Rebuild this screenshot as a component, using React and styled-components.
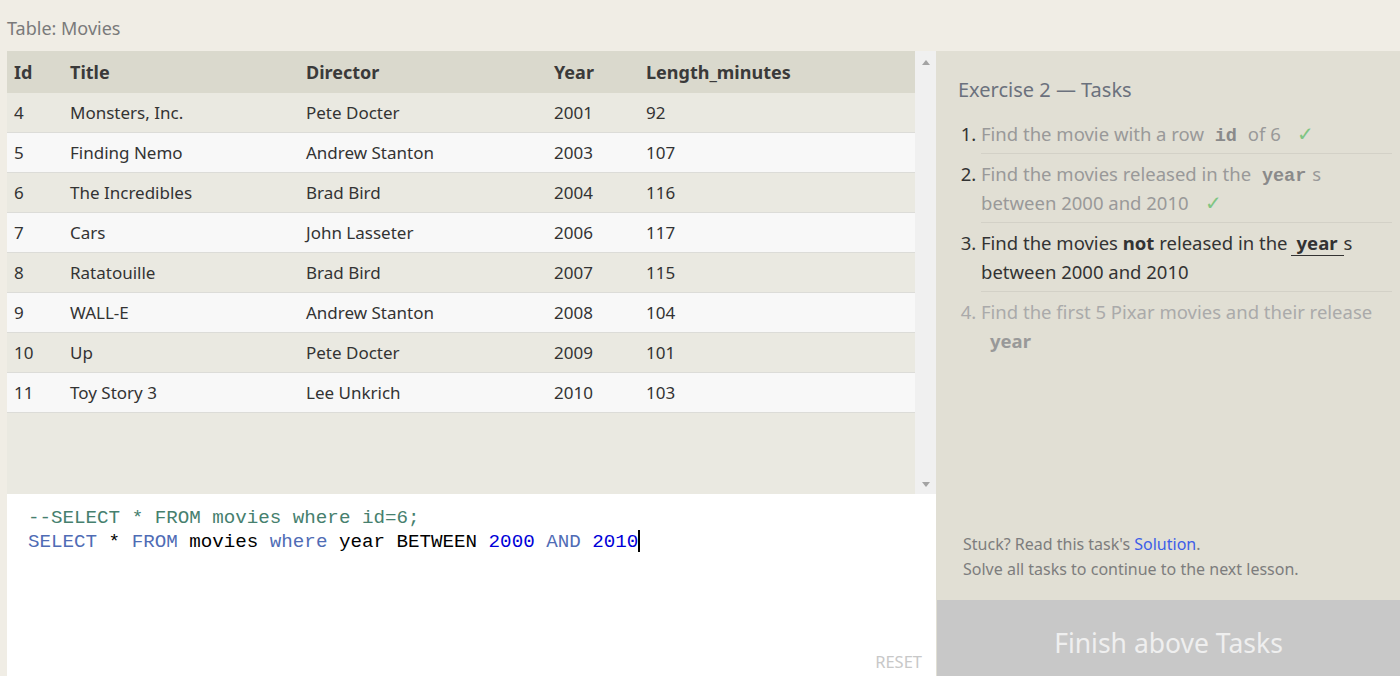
import styled, { createGlobalStyle } from "styled-components";

const GlobalStyle = createGlobalStyle`
  html, body {
    margin: 0;
    padding: 0;
    background: #f0ede5;
    font-family: "Noto Sans", "Open Sans", sans-serif;
    color: #333;
  }
`;

const movies = [
  [4, "Monsters, Inc.", "Pete Docter", 2001, 92],
  [5, "Finding Nemo", "Andrew Stanton", 2003, 107],
  [6, "The Incredibles", "Brad Bird", 2004, 116],
  [7, "Cars", "John Lasseter", 2006, 117],
  [8, "Ratatouille", "Brad Bird", 2007, 115],
  [9, "WALL-E", "Andrew Stanton", 2008, 104],
  [10, "Up", "Pete Docter", 2009, 101],
  [11, "Toy Story 3", "Lee Unkrich", 2010, 103],
];

// widths are border-box widths of each column
const columns = [
  { name: "Id", width: 56 },
  { name: "Title", width: 236 },
  { name: "Director", width: 248 },
  { name: "Year", width: 92 },
  { name: "Length_minutes", width: 276 },
];

const Page = styled.div`
  height: 676px;
  display: flex;
  flex-direction: column;
  overflow: hidden;
`;

const TopBar = styled.div`
  height: 51px;
  padding: 4px 0 0 7px;
  display: flex;
  align-items: center;
  font-size: 18px;
  color: #7a7a7a;
  box-sizing: border-box;
`;

const Main = styled.div`
  flex: 1;
  display: flex;
  padding-left: 7px;
`;

const Left = styled.div`
  width: 929px;
  display: flex;
  flex-direction: column;
`;

const TableArea = styled.div`
  height: 443px;
  display: flex;
  background: #eae9e1;
`;

const TableScroll = styled.div`
  flex: 1;
  overflow: hidden;
`;

const Table = styled.table`
  width: 100%;
  border-collapse: collapse;
  table-layout: fixed;
  font-size: 17px;
`;

const Th = styled.th`
  box-sizing: border-box;
  text-align: left;
  height: 42px;
  padding: 0 0 0 7px;
  background: #dad9cd;
  font-weight: 700;
  font-size: 18px;
  color: #3a3a3a;
`;

const Tr = styled.tr`
  background: ${(p) => (p.$even ? "#f8f8f8" : "#eae9e1")};
  border-bottom: 1px solid #dcdcd8;
`;

const Td = styled.td`
  height: 39px;
  padding: 0 0 0 7px;
  color: #333;
`;

const Scrollbar = styled.div`
  width: 21px;
  background: #f0f0f0;
  display: flex;
  flex-direction: column;
  justify-content: space-between;
  align-items: center;
  padding: 9px 0 7px;
  box-sizing: border-box;
`;

const Arrow = styled.div`
  width: 0;
  height: 0;
  border-left: 4.5px solid transparent;
  border-right: 4.5px solid transparent;
  ${(p) =>
    p.$down
      ? "border-top: 5px solid #a3a3a3;"
      : "border-bottom: 5px solid #a3a3a3;"}
`;

const Editor = styled.div`
  flex: 1;
  position: relative;
  background: #fff;
  padding: 12px 0 0 21px;
  font-family: "Liberation Mono", "DejaVu Sans Mono", monospace;
  font-size: 19.2px;
  line-height: 24px;
  color: #000;
`;

const CodeLine = styled.div`
  white-space: pre;
`;

const Tok = styled.span`
  color: ${(p) =>
    ({ comment: "#46806e", kw: "#4f6cb5", num: "#0000d8", plain: "#000" })[
      p.$k
    ]};
`;

const Caret = styled.span`
  display: inline-block;
  width: 2px;
  height: 22px;
  background: #000;
  vertical-align: -5px;
`;

const Reset = styled.div`
  position: absolute;
  right: 14px;
  bottom: 2px;
  font-size: 16.5px;
  color: #c8c8c8;
  font-family: "Noto Sans", sans-serif;
`;

const Right = styled.div`
  flex: 1;
  display: flex;
  flex-direction: column;
  background: #e1dfd4;
`;

const TaskBox = styled.div`
  flex: 1;
  padding: 25px 8px 0 22px;
  display: flex;
  flex-direction: column;
`;

const TaskTitle = styled.div`
  font-size: 20px;
  line-height: 28px;
  color: #6b717d;
  margin-bottom: 10px;
`;

const List = styled.ol`
  margin: 0;
  padding: 0 0 0 23px;
  font-size: 18.5px;
  line-height: 29px;
`;

const Item = styled.li`
  padding: 5px 0;
  border-bottom: ${(p) => (p.$last ? "none" : "1px solid #d3d1c7")};
  color: ${(p) =>
    p.$state === "current" ? "#333" : p.$state === "done" ? "#999" : "#aaa"};
  &::marker {
    color: ${(p) => (p.$state === "todo" ? "#aaa" : "#333")};
  }
`;

const Code = styled.code`
  font-family: "Liberation Mono", "DejaVu Sans Mono", monospace;
  font-weight: 700;
  color: #8a8a8a;
  padding: 0 6px;
  font-size: 18.5px;
  line-height: 0;
`;

const Field = styled.span`
  display: inline-block;
  line-height: 24px;
  font-weight: 700;
  padding: 0 6px;
  margin-left: 3px;
  color: ${(p) => (p.$active ? "#333" : "#999")};
  border-bottom: ${(p) => (p.$active ? "1.5px solid #333" : "none")};
`;

const Check = styled.span`
  color: #7fc583;
  font-size: 20px;
  line-height: 0;
  margin-left: 16px;
`;

const Hint = styled.div`
  margin-top: auto;
  padding: 0 0 18px 5px;
  font-size: 16px;
  line-height: 25px;
  color: #7d7d7d;
  a {
    color: #3d5ee8;
    text-decoration: none;
  }
`;

const FinishButton = styled.div`
  height: 76px;
  box-sizing: border-box;
  padding-top: 10px;
  background: #c8c8c8;
  color: #efefef;
  font-size: 26.5px;
  display: flex;
  align-items: center;
  justify-content: center;
  margin-left: 1px;
`;

export default function App() {
  return (
    <Page>
      <GlobalStyle />
      <TopBar>Table: Movies</TopBar>
      <Main>
        <Left>
          <TableArea>
            <TableScroll>
              <Table>
                <colgroup>
                  {columns.map((c) => (
                    <col key={c.name} style={{ width: c.width }} />
                  ))}
                </colgroup>
                <thead>
                  <tr>
                    {columns.map((c) => (
                      <Th key={c.name}>{c.name}</Th>
                    ))}
                  </tr>
                </thead>
                <tbody>
                  {movies.map((m, i) => (
                    <Tr key={m[0]} $even={i % 2 === 1}>
                      {m.map((v, j) => (
                        <Td key={j}>{v}</Td>
                      ))}
                    </Tr>
                  ))}
                </tbody>
              </Table>
            </TableScroll>
            <Scrollbar>
              <Arrow />
              <Arrow $down />
            </Scrollbar>
          </TableArea>
          <Editor>
            <CodeLine>
              <Tok $k="comment">--SELECT * FROM movies where id=6;</Tok>
            </CodeLine>
            <CodeLine>
              <Tok $k="kw">SELECT</Tok> * <Tok $k="kw">FROM</Tok> movies{" "}
              <Tok $k="kw">where</Tok> year BETWEEN <Tok $k="num">2000</Tok>{" "}
              <Tok $k="kw">AND</Tok> <Tok $k="num">2010</Tok>
              <Caret />
            </CodeLine>
            <Reset>RESET</Reset>
          </Editor>
        </Left>
        <Right>
          <TaskBox>
            <TaskTitle>Exercise 2 — Tasks</TaskTitle>
            <List>
              <Item $state="done">
                Find the movie with a row <Code>id</Code> of 6<Check>✓</Check>
              </Item>
              <Item $state="done">
                Find the movies released in the <Code>year</Code>s between
                2000 and 2010<Check>✓</Check>
              </Item>
              <Item $state="current">
                Find the movies <b>not</b> released in the
                <Field $active>year</Field>s between 2000 and 2010
              </Item>
              <Item $state="todo" $last>
                Find the first 5 Pixar movies and their release{" "}
                <Field>year</Field>
              </Item>
            </List>
            <Hint>
              Stuck? Read this task's <a href="#">Solution</a>.
              <br />
              Solve all tasks to continue to the next lesson.
            </Hint>
          </TaskBox>
          <FinishButton>Finish above Tasks</FinishButton>
        </Right>
      </Main>
    </Page>
  );
}
